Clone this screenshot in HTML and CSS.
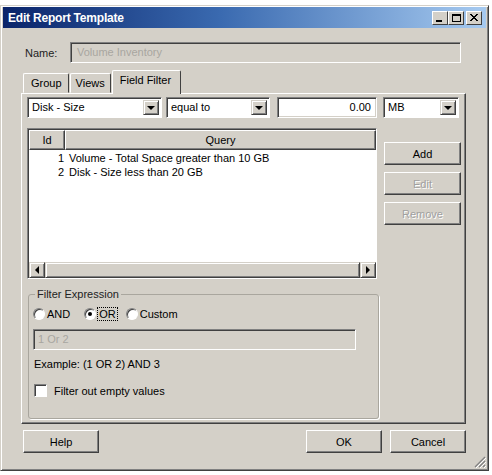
FILE: index.html
```html
<!DOCTYPE html>
<html lang="en">
<head>
    <meta charset="UTF-8">
    <title>Edit Report Template</title>
    <link rel="stylesheet" href="styles.css">
</head>
<body>
<div class="window">
    <!-- Title bar -->
    <div class="titlebar">
        <span class="title">Edit Report Template</span>
        <div class="caption-buttons">
            <span class="cap-btn"><span class="min-glyph"></span></span>
            <span class="cap-btn"><span class="max-glyph"></span></span>
            <span class="cap-btn close">
                <svg width="8" height="7" viewBox="0 0 8 7"><path d="M0 0 L7 7 M1 0 L8 7 M7 0 L0 7 M8 0 L1 7" stroke="#000" stroke-width="1"/></svg>
            </span>
        </div>
    </div>

    <div class="content">
        <!-- Name -->
        <div class="name-row">
            <label class="name-label">Name:</label>
            <div class="textbox disabled name-box">Volume Inventory</div>
        </div>

        <!-- Tabs -->
        <div class="tabs">
            <span class="tab">Group</span>
            <span class="tab">Views</span>
            <span class="tab active">Field Filter</span>
        </div>

        <div class="tab-panel">
            <div class="filter-row">
                <div class="combo field-combo"><span class="combo-text">Disk - Size</span><span class="drop"><i></i></span></div>
                <div class="combo op-combo"><span class="combo-text">equal to</span><span class="drop"><i></i></span></div>
                <div class="textbox number-box">0.00</div>
                <div class="combo unit-combo"><span class="combo-text">MB</span><span class="drop"><i></i></span></div>
            </div>

            <div class="list-area">
                <div class="listview">
                    <div class="list-header">
                        <span class="col-head col-id">Id</span>
                        <span class="col-head col-query">Query</span>
                    </div>
                    <div class="list-body">
                        <div class="list-row"><span class="cell-id">1</span><span class="cell-query">Volume - Total Space greater than 10 GB</span></div>
                        <div class="list-row"><span class="cell-id">2</span><span class="cell-query">Disk - Size less than 20 GB</span></div>
                    </div>
                    <div class="hscroll">
                        <span class="scroll-btn"><i class="arrow-left"></i></span>
                        <span class="scroll-thumb"></span>
                        <span class="scroll-btn"><i class="arrow-right"></i></span>
                    </div>
                </div>
                <div class="side-buttons">
                    <button class="btn">Add</button>
                    <button class="btn" disabled>Edit</button>
                    <button class="btn" disabled>Remove</button>
                </div>
            </div>

            <!-- Filter expression group -->
            <fieldset class="group">
                <legend>Filter Expression</legend>
                <div class="radio-row">
                    <span class="radio-item"><span class="radio"></span>AND</span>
                    <span class="radio-item"><span class="radio checked"></span><span class="focus">OR</span></span>
                    <span class="radio-item"><span class="radio"></span>Custom</span>
                </div>
                <div class="textbox disabled expr-box">1 Or 2</div>
                <p class="example">Example: (1 OR 2) AND 3</p>
                <div class="check-row"><span class="checkbox"></span>Filter out empty values</div>
            </fieldset>
        </div>

        <!-- Dialog buttons -->
        <div class="footer">
            <button class="btn">Help</button>
            <div class="footer-right">
                <button class="btn">OK</button>
                <button class="btn">Cancel</button>
            </div>
        </div>
    </div>
    <div class="grip">
        <svg width="12" height="12" viewBox="0 0 12 12">
            <path d="M11 1 L1 11 M11 5 L5 11 M11 9 L9 11" stroke="#808080" stroke-width="1.2"/>
            <path d="M12 2 L2 12 M12 6 L6 12 M12 10 L10 12" stroke="#fff" stroke-width="1"/>
        </svg>
    </div>
</div>
</body>
</html>
```

FILE: styles.css
```css
* {
    box-sizing: border-box;
}

body {
    margin: 0;
    background: #fff;
    font-family: "Liberation Sans", Arial, sans-serif;
    font-size: 11px;
    color: #000;
}

.window {
    position: relative;
    width: 489px;
    height: 466px;
    margin-top: 5px;
    background: #d4d0c8;
    border: 1px solid #d4d0c8;
    border-right-color: #404040;
    border-bottom-color: #404040;
    box-shadow: inset 1px 1px 0 #fff, inset -1px -1px 0 #808080;
    padding: 1px 2px 0 2px;
}

.titlebar {
    height: 21px;
    display: flex;
    align-items: center;
    justify-content: space-between;
    background: linear-gradient(to right, #0a246a, #3a6ab0 45%, #a6caf0);
    padding: 0 4px 0 5px;
}

.title {
    color: #fff;
    font-family: "Liberation Sans", Arial, sans-serif;
    font-weight: bold;
    font-size: 12px;
    letter-spacing: -0.2px;
}

.caption-buttons {
    display: flex;
    gap: 0;
}

.cap-btn {
    width: 16px;
    height: 14px;
    background: #d4d0c8;
    border: 1px solid;
    border-color: #fff #404040 #404040 #fff;
    display: flex;
    align-items: center;
    justify-content: center;
    position: relative;
}

.cap-btn.close {
    margin-left: 2px;
}

.min-glyph {
    width: 6px;
    height: 2px;
    background: #000;
    margin-top: 6px;
    margin-left: -2px;
}

.max-glyph {
    width: 9px;
    height: 8px;
    border: 1px solid #000;
    border-top-width: 2px;
}

.content {
    padding: 0 20px 0 18px;
}

.name-row {
    display: flex;
    align-items: center;
    margin-top: 14px;
}

.name-label {
    width: 49px;
    padding-left: 4px;
    color: #222;
}

.textbox {
    height: 21px;
    background: #fff;
    border: 1px solid;
    border-color: #808080 #fff #fff #808080;
    box-shadow: inset 1px 1px 0 #404040, inset -1px -1px 0 #d4d0c8;
    padding: 3px 4px;
    white-space: nowrap;
}

.textbox.disabled {
    background: #d4d0c8;
    color: #a8a6a0;
}

.name-box {
    width: 391px;
    padding-left: 6px;
}

.tabs {
    display: flex;
    margin-top: 8px;
    padding-left: 2px;
    height: 22px;
    align-items: flex-end;
}

.tab {
    height: 20px;
    padding: 3px 5px 0;
    border: 1px solid;
    border-color: #fff #404040 transparent #fff;
    border-radius: 2px 2px 0 0;
    font-size: 11px;
    margin-right: 1px;
}

.tab:first-child {
    padding: 3px 6px 0 7px;
}

.tab.active {
    height: 24px;
    margin-bottom: -1px;
    padding: 3px 9px 0 7px;
    background: #d4d0c8;
    position: relative;
    z-index: 1;
    border-bottom: none;
}

.tab-panel {
    height: 331px;
    border: 1px solid;
    border-color: #fff #404040 #404040 #fff;
    box-shadow: inset -1px -1px 0 #808080;
    padding: 3px 0 0 5px;
}

.filter-row {
    display: flex;
    height: 21px;
}

.combo {
    display: flex;
    height: 21px;
    background: #fff;
    border: 1px solid;
    border-color: #808080 #fff #fff #808080;
    box-shadow: inset 1px 1px 0 #404040;
    padding: 2px 2px 2px 2px;
}

.combo-text {
    flex: 1;
    padding: 1px 0 0 2px;
}

.drop {
    width: 16px;
    background: #d4d0c8;
    border: 1px solid;
    border-color: #d4d0c8 #404040 #404040 #d4d0c8;
    box-shadow: inset 1px 1px 0 #fff, inset -1px -1px 0 #808080;
    display: flex;
    align-items: center;
    justify-content: center;
}

.drop i {
    width: 0;
    height: 0;
    border-left: 4px solid transparent;
    border-right: 4px solid transparent;
    border-top: 4px solid #000;
}

.field-combo {
    width: 135px;
}

.op-combo {
    width: 104px;
    margin-left: 4px;
}

.number-box {
    width: 100px;
    margin-left: 7px;
    text-align: right;
    padding-right: 5px;
}

.unit-combo {
    width: 76px;
    margin-left: 6px;
}

.list-area {
    display: flex;
    margin-top: 10px;
}

.listview {
    width: 350px;
    height: 151px;
    background: #fff;
    border: 1px solid;
    border-color: #808080 #fff #fff #808080;
    box-shadow: inset 1px 1px 0 #404040;
    padding: 1px 0 0 1px;
    display: flex;
    flex-direction: column;
}

.list-header {
    display: flex;
    height: 20px;
}

.col-head {
    background: #d4d0c8;
    border: 1px solid;
    border-color: #fff #404040 #404040 #fff;
    box-shadow: inset -1px -1px 0 #808080;
    text-align: center;
    padding-top: 3px;
}

.col-id {
    width: 36px;
}

.col-query {
    flex: 1;
}

.list-body {
    flex: 1;
    padding-top: 2px;
}

.list-row {
    display: flex;
    height: 14px;
    line-height: 13px;
}

.cell-id {
    width: 35px;
    text-align: right;
}

.cell-query {
    padding-left: 5px;
}

.hscroll {
    display: flex;
    height: 16px;
    background: #e8e6e1;
}

.scroll-btn {
    width: 16px;
    height: 16px;
    background: #d4d0c8;
    border: 1px solid;
    border-color: #d4d0c8 #404040 #404040 #d4d0c8;
    box-shadow: inset 1px 1px 0 #fff, inset -1px -1px 0 #808080;
    display: flex;
    align-items: center;
    justify-content: center;
}

.scroll-thumb {
    flex: 1;
    background: #d4d0c8;
    border: 1px solid;
    border-color: #d4d0c8 #404040 #404040 #d4d0c8;
    box-shadow: inset 1px 1px 0 #fff, inset -1px -1px 0 #808080;
}

.arrow-left {
    border-top: 4px solid transparent;
    border-bottom: 4px solid transparent;
    border-right: 4px solid #000;
}

.arrow-right {
    border-top: 4px solid transparent;
    border-bottom: 4px solid transparent;
    border-left: 4px solid #000;
}

.side-buttons {
    display: flex;
    flex-direction: column;
    gap: 7px;
    margin-left: 7px;
    margin-top: 14px;
}

.btn {
    width: 77px;
    height: 23px;
    font-family: "Liberation Sans", Arial, sans-serif;
    font-size: 11px;
    color: #000;
    background: #d4d0c8;
    border: 1px solid;
    border-color: #fff #404040 #404040 #fff;
    box-shadow: inset -1px -1px 0 #808080;
    padding: 0;
}

.btn:disabled {
    color: #a0a0a0;
    text-shadow: 1px 1px 0 #fff;
}

.group {
    width: 351px;
    height: 131px;
    margin: 9px 0 0 1px;
    border: 1px solid #a9a69e;
    border-radius: 3px;
    box-shadow: 1px 1px 0 #fff;
    padding: 0 0 0 4px;
}

.group legend {
    padding: 0 2px;
    margin-left: 2px;
    color: #222;
}

.radio-row {
    display: flex;
    margin-top: 7px;
    height: 14px;
    align-items: center;
}

.radio-item {
    display: flex;
    align-items: center;
    margin-right: 9px;
}

.radio-item:first-child {
    margin-right: 14px;
}

.radio {
    width: 12px;
    height: 12px;
    border-radius: 50%;
    background: #fff;
    border: 1px solid;
    border-color: #808080 #fff #fff #808080;
    box-shadow: inset 1px 1px 0 #404040;
    margin-right: 2px;
    position: relative;
}

.radio.checked::after {
    content: "";
    position: absolute;
    left: 3px;
    top: 3px;
    width: 4px;
    height: 4px;
    border-radius: 50%;
    background: #000;
}

.focus {
    outline: 1px dotted #000;
    padding: 0 1px;
}

.expr-box {
    width: 323px;
    margin-top: 8px;
    padding-left: 4px;
}

.example {
    margin: 8px 0 0 1px;
}

.check-row {
    display: flex;
    align-items: center;
    margin-top: 14px;
    margin-left: 1px;
}

.checkbox {
    width: 13px;
    height: 13px;
    background: #fff;
    border: 1px solid;
    border-color: #808080 #fff #fff #808080;
    box-shadow: inset 1px 1px 0 #404040;
    margin-right: 7px;
}

.footer {
    display: flex;
    justify-content: space-between;
    margin-top: 6px;
    padding-left: 2px;
}

.footer-right {
    display: flex;
    gap: 8px;
}

.footer .btn {
    width: 76px;
}

.grip {
    position: absolute;
    right: 2px;
    bottom: 2px;
    width: 12px;
    height: 12px;
}
```
